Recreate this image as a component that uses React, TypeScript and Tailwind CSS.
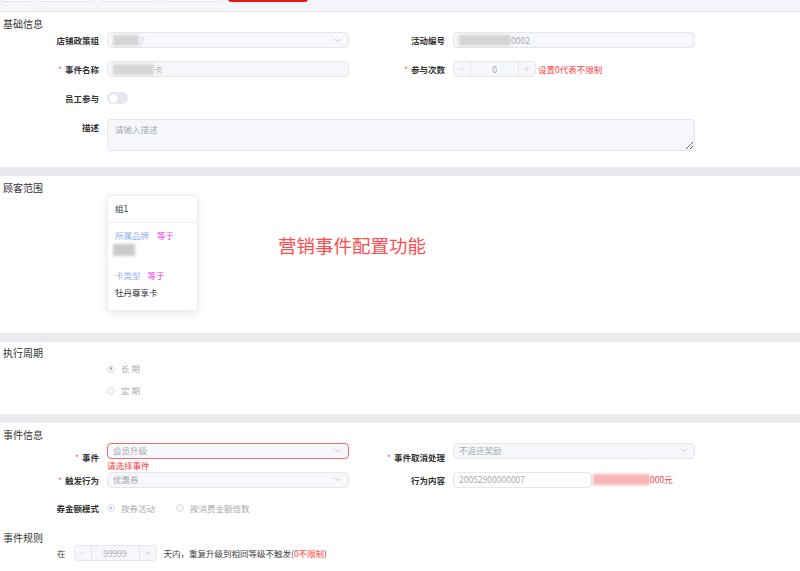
import React from "react";
import { ChevronDown, Minus, Plus } from "lucide-react";

const box =
  "h-[16px] rounded-[4px] border border-[#e4e7ed] bg-[#f5f7fa] flex items-center px-[5px] text-[8.5px] text-[#a8abb2] shrink-0";

function Label({
  text,
  required,
  w = "w-[99px]",
}: {
  text: string;
  required?: boolean;
  w?: string;
}) {
  return (
    <div
      className={`${w} shrink-0 flex justify-end items-center gap-[3px] text-[8.5px] leading-[16px] font-bold text-[#333]`}
    >
      {required && <span className="text-[#f56c6c] font-normal">*</span>}
      <span>{text}</span>
    </div>
  );
}

function Blur({ w, color = "bg-[#d4d4d4]" }: { w: string; color?: string }) {
  return <span className={`inline-block h-[11px] ${w} ${color} blur-[1.5px]`} />;
}

function Select({
  value,
  error,
  w = "w-[242px]",
}: {
  value: React.ReactNode;
  error?: boolean;
  w?: string;
}) {
  return (
    <div
      className={`${box} ${w} justify-between pr-[6px] ${
        error ? "border-[#f56c6c]" : ""
      }`}
    >
      <span className="flex items-center">{value}</span>
      <ChevronDown size={9} strokeWidth={1.5} color="#a8abb2" />
    </div>
  );
}

function Stepper({ value }: { value: string }) {
  return (
    <div className="h-[16px] w-[83px] shrink-0 rounded-[4px] border border-[#e4e7ed] bg-[#f5f7fa] flex text-[8.5px] text-[#a8abb2]">
      <span className="w-[17px] flex items-center justify-center border-r border-[#e4e7ed]">
        <Minus size={8} strokeWidth={1.5} color="#c0c4cc" />
      </span>
      <span className="flex-1 flex items-center justify-center">{value}</span>
      <span className="w-[17px] flex items-center justify-center border-l border-[#e4e7ed]">
        <Plus size={8} strokeWidth={1.5} color="#c0c4cc" />
      </span>
    </div>
  );
}

function Radio({ label, checked }: { label: string; checked?: boolean }) {
  return (
    <span className="flex items-center gap-[6px] text-[8.5px] text-[#a8abb2]">
      <span className="w-[8px] h-[8px] rounded-full border border-[#dcdfe6] bg-[#f5f7fa] flex items-center justify-center">
        {checked && <span className="w-[2.5px] h-[2.5px] rounded-full bg-[#a8abb2]" />}
      </span>
      <span>{label}</span>
    </span>
  );
}

function Title({ children, className = "" }: { children: string; className?: string }) {
  return (
    <h3 className={`pl-[3px] text-[10px] leading-[14px] text-[#333] ${className}`}>
      {children}
    </h3>
  );
}

const Gap = () => <div className="h-[9px] bg-[#e8eaed]" />;

export default function App() {
  return (
    <div className="w-[800px] h-[571px] overflow-hidden bg-white font-['Noto_Sans_CJK_SC','Noto_Sans',sans-serif]">
      {/* tab buttons, cut off by the scroll */}
      <div className="h-[12px] bg-[#f3f5f8] border-b border-[#e2e6ec] overflow-hidden flex gap-[7px]">
        <span className="w-[31px] h-[12px] -mt-[10px] rounded-b-[3px] border border-[#dfe3ea] bg-white" />
        <span className="w-[56px] h-[12px] -mt-[10px] rounded-b-[3px] border border-[#dfe3ea] bg-white" />
        <span className="w-[56px] h-[12px] -mt-[10px] rounded-b-[3px] border border-[#dfe3ea] bg-white" />
        <span className="w-[56px] h-[12px] -mt-[10px] rounded-b-[3px] border border-[#dfe3ea] bg-white" />
        <span className="w-[80px] h-[12px] -mt-[10px] ml-[1px] rounded-b-[3px] bg-[#e8141b]" />
      </div>

      {/* 基础信息 */}
      <section className="pt-[5px] pb-[16px]">
        <Title>基础信息</Title>
        <div className="mt-[1px] flex flex-col gap-[13px]">
          <div className="flex">
            <Label text="店铺政策组" />
            <div className="ml-[8px]">
              <Select
                value={
                  <>
                    <Blur w="w-[26px]" />
                    <span className="ml-[1px] text-[#d0d4da]">?</span>
                  </>
                }
              />
            </div>
            <Label text="活动编号" w="w-[96px]" />
            <div className={`${box} ml-[8px] w-[242px] px-[1px]`}>
              <Blur w="w-[52px]" />
              <span>0002</span>
            </div>
          </div>
          <div className="flex">
            <Label text="事件名称" required />
            <div className={`${box} ml-[8px] w-[242px]`}>
              <Blur w="w-[41px]" />
              <span>卡</span>
            </div>
            <Label text="参与次数" required w="w-[96px]" />
            <div className="ml-[8px] flex items-center">
              <Stepper value="0" />
              <span className="ml-[2px] text-[8.5px] text-[#ff4040]">设置0代表不限制</span>
            </div>
          </div>
          <div className="flex items-center h-[16px]">
            <Label text="员工参与" />
            <span className="ml-[8px] w-[21px] h-[12px] rounded-full bg-[#e4e7ed] flex items-center px-[1.5px]">
              <span className="w-[9px] h-[9px] rounded-full bg-white shadow-[0_0_1px_rgba(0,0,0,0.2)]" />
            </span>
          </div>
          <div className="flex items-start">
            <Label text="描述" />
            <textarea
              readOnly
              placeholder="请输入描述"
              className="ml-[8px] w-[588px] h-[32px] rounded-[4px] border border-[#e4e7ed] bg-[#f5f7fa] px-[7px] py-[2px] text-[8.5px] leading-[14px] placeholder:text-[#a8abb2] outline-none"
            />
          </div>
        </div>
      </section>

      <Gap />

      {/* 顾客范围 */}
      <section className="pt-[4.5px] pb-[22px]">
        <Title>顾客范围</Title>
        <div className="flex items-start">
          <div className="ml-[107px] w-[91px] h-[116px] rounded-[3px] border border-[#ebeef5] bg-white shadow-[0_2px_8px_rgba(0,0,0,0.1)]">
            <div className="h-[27px] px-[7px] flex items-center border-b border-[#ebeef5] text-[8.5px] text-[#333]">
              组1
            </div>
            <div className="px-[7px] pt-[6px] text-[8.5px] leading-[12px]">
              <div className="flex gap-[8px]">
                <span className="text-[#8fb3f4]">所属品牌</span>
                <span className="text-[#ee3cf0]">等于</span>
              </div>
              <span className="block mt-[3px] -ml-[2px] w-[22px] h-[12px] bg-[#c9c9c9] blur-[1.5px]" />
              <div className="mt-[13px] flex gap-[7px]">
                <span className="text-[#8fb3f4]">卡类型</span>
                <span className="text-[#ee3cf0]">等于</span>
              </div>
              <div className="mt-[5px] text-[#333]">牡丹尊享卡</div>
            </div>
          </div>
          <p className="ml-[80px] mt-[38px] text-[18.5px] leading-[24px] text-[#ff4d4f]">
            营销事件配置功能
          </p>
        </div>
      </section>

      <Gap />

      {/* 执行周期 */}
      <section className="pt-[4.5px] pb-[16px]">
        <Title>执行周期</Title>
        <div className="pl-[107px] mt-[1.5px] flex flex-col gap-[8px]">
          <div className="h-[14px] flex items-center">
            <Radio label="长 期" checked />
          </div>
          <div className="h-[14px] flex items-center">
            <Radio label="定 期" />
          </div>
        </div>
      </section>

      <Gap />

      {/* 事件信息 / 事件规则 */}
      <section className="pt-[5px]">
        <Title>事件信息</Title>
        <div className="mt-[1px] flex">
          <Label text="事件" required />
          <div className="ml-[8px] w-[242px]">
            <Select value="会员升级" error />
            <p className="text-[8.5px] leading-[12px] text-[#ff4040]">请选择事件</p>
          </div>
          <Label text="事件取消处理" required w="w-[96px]" />
          <div className="ml-[8px]">
            <Select value="不返还奖励" />
          </div>
        </div>
        <div className="mt-[1px] flex">
          <Label text="触发行为" required />
          <div className="ml-[8px]">
            <Select value="优惠券" />
          </div>
          <Label text="行为内容" w="w-[96px]" />
          <div className="ml-[8px] flex items-center">
            <div className={`${box} w-[139px] bg-white text-[#8a8d93]`}>20052900000007</div>
            <span className="ml-[1px] inline-block w-[57px] h-[11px] bg-[#f7b5b5] blur-[1.5px]" />
            <span className="text-[8.5px] text-[#ff4040]">000元</span>
          </div>
        </div>
        <div className="mt-[13.5px] h-[14px] flex items-center">
          <Label text="券金额模式" />
          <div className="ml-[8px] flex items-center gap-[21px]">
            <Radio label="按券活动" checked />
            <Radio label="按消费金额倍数" />
          </div>
        </div>

        <Title className="mt-[15.5px]">事件规则</Title>
        <div className="mt-[0.5px] pl-[57px] flex items-center text-[8.5px] text-[#444]">
          <span>在</span>
          <span className="ml-[8px]">
            <Stepper value="99999" />
          </span>
          <span className="ml-[7px]">
            天内，重复升级到相同等级不触发(<span className="text-[#ff4040]">0不限制</span>)
          </span>
        </div>
      </section>
    </div>
  );
}
